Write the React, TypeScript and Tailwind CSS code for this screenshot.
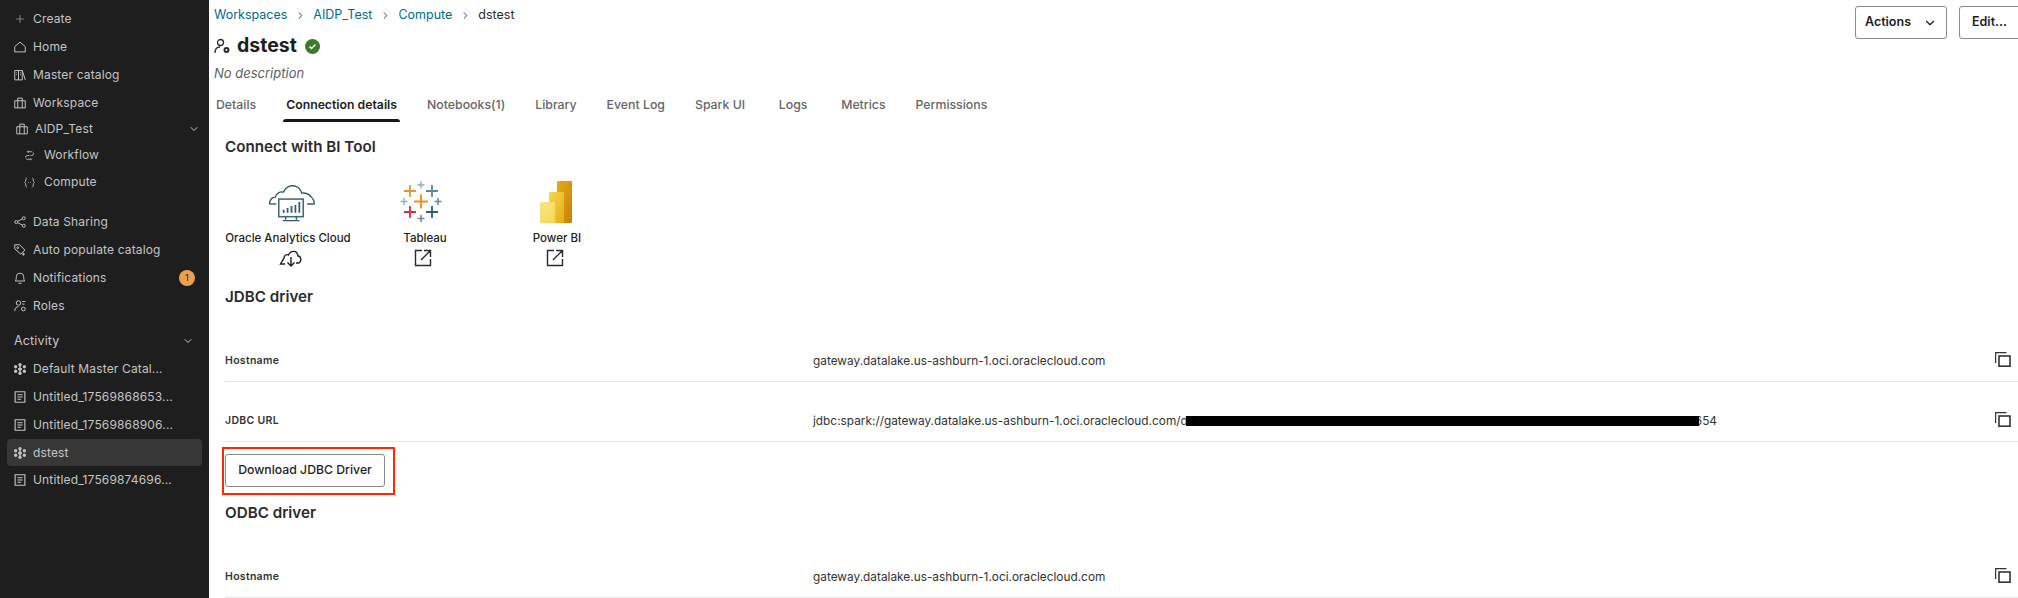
import { ChevronDown, ChevronRight, Plus } from "lucide-react"
import type { ReactNode } from "react"

const I = ({ children, size = 12 }: { children: ReactNode; size?: number }) => (
    <svg width={size} height={size} viewBox="0 0 16 16" fill="none" stroke="currentColor" strokeWidth="1.300" className="shrink-0">
        {children}
    </svg>
)

const HomeIcon = () => <I><path d="M1 14.500V7.500L8 1.500l7 6v7z" /></I>
const CatalogIcon = () => <I><path d="M1 2h5v12.500H1zM6 2h5v12.500H6zM11 2l4 12.500M3 5h1M8 5h1M3 7.500h1M8 7.500h1" /></I>
const CaseIcon = () => <I><path d="M1 5h14v9.500H1zM5 5V1.500h6V5M5 5v9.500M11 5v9.500" /></I>
const ShareIcon = () => <I><circle cx="3" cy="8" r="2" /><circle cx="13" cy="3" r="2" /><circle cx="13" cy="13" r="2" /><path d="M5 7l6-3M5 9l6 3" /></I>
const TagIcon = () => <I><path d="M1 1h6.500l7 7-5.500 5.500-8-7zM12.500 11.500v4M10.500 13.500h4" /><circle cx="5" cy="5" r="1.200" /></I>
const BellIcon = () => <I><path d="M1.500 12c1.500-1 1.500-3 1.500-5.500a5 5 0 0 1 10 0c0 2.500 0 4.500 1.500 5.500zM6 15h4" /></I>
const RolesIcon = () => <I><circle cx="6" cy="4" r="3" /><path d="M1 15c0-4 2-6 5-6M11 2h4M11 5.500h3" /><circle cx="12.500" cy="12" r="2.500" /></I>
const NodesIcon = () => (
    <svg width="12" height="12" viewBox="0 0 16 16" fill="currentColor" className="shrink-0">
        {[[8, 2.200], [8, 13.800], [2.200, 5], [13.800, 5], [2.200, 11], [13.800, 11]].map(([cx, cy], i) => (
            <circle key={i} cx={cx} cy={cy} r="2.200" />
        ))}
        <path d="M5.500 6.500h5v3h-5zM7 2.500h2v11H7z" />
    </svg>
)
const DocIcon = () => <I><path d="M1.500 1h13v14h-13zM4.500 5h7M4.500 8h7M4.500 11h5" strokeWidth="1.500" /></I>

const NavRow = ({ icon, label, right }: { icon: ReactNode; label: string; right?: ReactNode }) => (
    <div className="flex h-[28px] items-center gap-[8px] pl-[14px] pr-[14px]">
        {icon}
        <span className="-ml-[1px] flex-1">{label}</span>
        {right}
    </div>
)

const Sidebar = () => (
    <aside className="flex h-[598px] w-[209px] shrink-0 flex-col bg-[#1e1e1e] pt-[5px] text-[12px] tracking-[0.15px] text-[#c4c4c4]">
        <NavRow icon={<Plus size={12} strokeWidth={1.200} />} label="Create" />
        <NavRow icon={<HomeIcon />} label="Home" />
        <NavRow icon={<CatalogIcon />} label="Master catalog" />
        <NavRow icon={<CaseIcon />} label="Workspace" />
        <div className="flex h-[24px] items-center gap-[7px] pl-[16px] pr-[9px]">
            <CaseIcon />
            <span className="flex-1">AIDP_Test</span>
            <ChevronDown size={12} />
        </div>
        <div className="flex h-[28px] items-center gap-[9px] pl-[24px]">
            <I size={11}><path d="M5 2.500h6a2.700 2.700 0 0 1 0 5.500H5a2.700 2.700 0 0 0 0 5.500h6M6.500 1L5 2.500 6.500 4M9.500 12L11 13.500 9.500 15" strokeDasharray="7 1.500" /></I>
            <span>Workflow</span>
        </div>
        <div className="flex h-[26px] items-center gap-[9px] pl-[24px]">
            <I size={11}><path d="M4 1C2 1 3.500 7 1 8c2.500 1 1 7 3 7M12 1c2 0 .5 6 3 7-2.500 1-1 7-3 7M6 8h.8M9.200 8h.8" /></I>
            <span>Compute</span>
        </div>
        <div className="h-[13px]" />
        <NavRow icon={<ShareIcon />} label="Data Sharing" />
        <NavRow icon={<TagIcon />} label="Auto populate catalog" />
        <NavRow
            icon={<BellIcon />}
            label="Notifications"
            right={<span className="flex h-[16px] w-[16px] items-center justify-center rounded-full bg-[#eda04f] text-[9px] text-[#1e1e1e]">1</span>}
        />
        <NavRow icon={<RolesIcon />} label="Roles" />
        <div className="mt-[7px] flex h-[28px] items-center justify-between pl-[14px] pr-[15px] text-[12.500px]">
            <span>Activity</span>
            <ChevronDown size={12} />
        </div>
        <NavRow icon={<NodesIcon />} label="Default Master Catal..." />
        <NavRow icon={<DocIcon />} label="Untitled_17569868653..." />
        <NavRow icon={<DocIcon />} label="Untitled_17569868906..." />
        <div className="mx-[7px] flex h-[27px] items-center gap-[7px] rounded-[4px] bg-[#373737] pl-[7px]">
            <NodesIcon />
            <span>dstest</span>
        </div>
        <NavRow icon={<DocIcon />} label="Untitled_17569874696..." />
    </aside>
)

const tabs = ["Details", "Connection details", "Notebooks(1)", "Library", "Event Log", "Spark UI", "Logs", "Metrics", "Permissions"]

const Tabs = () => (
    <div className="mt-[13px] flex gap-[30px] pl-[7px] text-[12.300px] font-medium text-[#666666]">
        {tabs.map((t) => (
            <div key={t} className={t === "Connection details" ? "relative h-[26px] min-w-[36px] text-center text-[12.250px] font-semibold text-[#1d1d1d]" : "h-[26px] min-w-[36px] text-center"}>
                {t}
                {t === "Connection details" && <div className="absolute -left-[3px] -right-[3px] bottom-0 h-[3px] rounded-t-[3px] bg-[#161513]" />}
            </div>
        ))}
    </div>
)

const ExternalIcon = () => (
    <svg width="18" height="18" viewBox="0 0 18 18" fill="none" stroke="#2b2b2b" strokeWidth="1.400" className="-ml-[4px]">
        <path d="M8 1.500H1.500v15h15V10M10 1.500h6.500V8M16.500 1.500L7 11" />
    </svg>
)

const CloudDownIcon = () => (
    <svg width="24" height="18" viewBox="0 0 24 18" fill="none" stroke="#1f1f1f" strokeWidth="1.400" className="ml-[6px]">
        <path d="M6 15H1.500L5 9c0-3 3-4 4.500-3C11 2 18 0 19 7c3 0 4 5 1 7h-3" />
        <path d="M12 8v9M8.500 13.500L12 17l3.500-3.500" />
    </svg>
)

const OacLogo = () => (
    <svg width="47" height="40" viewBox="0 0 48 40" fill="none" stroke="#2f5a6f" strokeWidth="1.400" className="ml-[6px]">
        <path d="M1.500 22c0-4 2.500-7 6-7 1-4 5-6 8-5 2-5 8-8 13-6 3 1 5 4 6 7 5-1 9 2 12 7 .6 1 .8 2.500.5 4h-7" />
        <path d="M1.500 22h7" />
        <rect x="11" y="17" width="25" height="18" strokeWidth="1.600" stroke="#44697c" />
        <path d="M18 35v3M29 35v3M15 39h17" />
        <path d="M16 31v-3M20 31v-5M24 31v-7M28 31v-8M32 31v-11" stroke="#2f5a6f" strokeWidth="1.800" />
    </svg>
)

const Cross = ({ x, y, s, c, w = 2 }: { x: number; y: number; s: number; c: string; w?: number }) => (
    <path d={`M${x - s} ${y}H${x + s}M${x} ${y - s}V${y + s}`} stroke={c} strokeWidth={w} />
)

const TableauLogo = () => (
    <svg width="42" height="42" viewBox="0 0 42 42" fill="none" className="-ml-[8px]">
        <Cross x={21} y={20.500} s={7} c="#e8962c" w={2.200} />
        <Cross x={21} y={4} s={3.500} c="#7fb3c8" w={1.400} />
        <Cross x={21} y={37.500} s={3.500} c="#6d8c9c" w={1.600} />
        <Cross x={4} y={20.500} s={3.500} c="#7fb3c8" w={1.400} />
        <Cross x={38} y={20.500} s={3.500} c="#6d8c9c" w={1.600} />
        <Cross x={10} y={10} s={6} c="#e8962c" w={1.800} />
        <Cross x={32} y={10} s={6} c="#5b879b" w={1.800} />
        <Cross x={10} y={31} s={6} c="#d6303f" w={1.800} />
        <Cross x={32} y={31} s={6} c="#2f5f7c" w={1.800} />
    </svg>
)

const PowerBiLogo = () => (
    <svg width="32" height="42" viewBox="0 0 32 42" className="-ml-[2px]">
        <defs>
            <linearGradient id="pb1" x1="0" y1="0" x2="1" y2="1">
                <stop offset="0" stopColor="#e6ad10" />
                <stop offset="1" stopColor="#c87d0e" />
            </linearGradient>
            <linearGradient id="pb2" x1="0" y1="0" x2="1" y2="1">
                <stop offset="0" stopColor="#f6d751" />
                <stop offset="1" stopColor="#e6ad10" />
            </linearGradient>
            <linearGradient id="pb3" x1="0" y1="0" x2="1" y2="1">
                <stop offset="0" stopColor="#f9e589" />
                <stop offset="1" stopColor="#f6d751" />
            </linearGradient>
        </defs>
        <rect x="17" y="0" width="15" height="42" rx="1" fill="url(#pb1)" />
        <rect x="9" y="11" width="15" height="31" rx="1" fill="url(#pb2)" />
        <rect x="0" y="21" width="15" height="21" rx="1" fill="url(#pb3)" />
    </svg>
)

const Tool = ({ logo, name, action, className }: { logo: ReactNode; name: string; action: ReactNode; className: string }) => (
    <div className={`flex flex-col items-center ${className}`}>
        <div className="flex h-[48px] items-center">{logo}</div>
        <div className="mt-[4px] h-[16px] whitespace-nowrap text-[11.500px] font-medium leading-[16px] text-[#1d1d1d]">{name}</div>
        <div className="mt-[2px] flex h-[20px] items-center">{action}</div>
    </div>
)

const CopyIcon = () => (
    <svg width="16" height="15" viewBox="0 0 16 15" fill="none" stroke="#333333" strokeWidth="1.200">
        <path d="M11.500 .6H.6v10.400" />
        <rect x="4" y="4" width="11" height="10.200" strokeWidth="1.600" />
    </svg>
)

const Row = ({ label, children }: { label: string; children: ReactNode }) => (
    <div className="flex h-[60px] items-end border-b border-[#e4e4e4] pb-[12px] text-[11.850px] text-[#333333]">
        <div className="w-[588px] text-[10.500px] font-semibold tracking-[0.3px] text-[#333333]">{label}</div>
        <div className="flex-1 leading-[16px]">{children}</div>
        <div className="pr-[7px] -translate-y-[2px]"><CopyIcon /></div>
    </div>
)

const Heading = ({ children, className = "" }: { children: ReactNode; className?: string }) => (
    <h2 className={`text-[15.200px] font-semibold leading-[20px] text-[#2b2b2b] ${className}`}>{children}</h2>
)

const Crumb = ({ children }: { children: ReactNode }) => (
    <>
        <span className="text-[#006b8f]">{children}</span>
        <ChevronRight size={11} className="mx-[7.500px] text-[#333333]" strokeWidth={2} />
    </>
)

export default function App() {
    return (
        <div className="flex h-[598px] w-[2018px] overflow-hidden bg-white font-['Inter',sans-serif]">
            <Sidebar />
            <main className="min-w-0 flex-1">
                <div className="flex items-start justify-between pl-[5px]">
                    <div>
                        <div className="flex h-[28px] items-center pt-[2px] text-[12.500px] text-[#2b2b2b]">
                            <Crumb>Workspaces</Crumb>
                            <Crumb>AIDP_Test</Crumb>
                            <Crumb>Compute</Crumb>
                            <span>dstest</span>
                        </div>
                        <div className="mt-[3px] flex h-[30px] items-center gap-[7px]">
                            <svg width="16" height="16" viewBox="0 0 16 16" fill="none" stroke="#2b2b2b" strokeWidth="1.300">
                                <circle cx="6.500" cy="4.500" r="3" />
                                <path d="M1 15c0-4 2-6 5-6" />
                                <circle cx="12.500" cy="12" r="2" strokeWidth="2" />
                            </svg>
                            <span className="text-[19.500px] font-bold leading-none text-[#1d1d1d]">dstest</span>
                            <svg width="15" height="15" viewBox="0 0 15 15" className="ml-[1px]">
                                <circle cx="7.500" cy="7.500" r="7.500" fill="#3f7a2a" />
                                <path d="M4.500 7.500l2 2 4-4" fill="none" stroke="white" strokeWidth="1.500" />
                            </svg>
                        </div>
                        <div className="mt-[2px] text-[13px] italic leading-[20px] text-[#5f5f5f]">No description</div>
                    </div>
                    <div className="mt-[6px] flex shrink-0 gap-[12px] -mr-[41px] text-[12.500px] font-semibold text-[#1d1d1d]">
                        <div className="flex h-[33px] w-[92px] items-center justify-center gap-[12px] rounded-[3px] border border-[#8a8a8a]">
                            Actions <ChevronDown size={14} strokeWidth={2} />
                        </div>
                        <div className="flex h-[33px] w-[100px] items-center rounded-[3px] border border-[#8a8a8a] pl-[12px]">Edit...</div>
                    </div>
                </div>
                <Tabs />
                <div className="pl-[16px] pt-[15px]">
                    <Heading>Connect with BI Tool</Heading>
                    <div className="mt-[21px] flex">
                        <Tool className="w-[126px]" logo={<OacLogo />} name="Oracle Analytics Cloud" action={<CloudDownIcon />} />
                        <Tool className="ml-[8px] w-[132px]" logo={<TableauLogo />} name="Tableau" action={<ExternalIcon />} />
                        <Tool className="w-[132px]" logo={<PowerBiLogo />} name="Power BI" action={<ExternalIcon />} />
                    </div>
                    <Heading className="mb-[15px] mt-[19px]">JDBC driver</Heading>
                    <Row label="Hostname">gateway.datalake.us-ashburn-1.oci.oraclecloud.com</Row>
                    <Row label="JDBC URL">
                        jdbc:spark://gateway.datalake.us-ashburn-1.oci.oraclecloud.com/d
                        <span className="relative z-10 -ml-[2px] inline-block h-[10px] w-[513px] translate-y-[1px] bg-black" />
                        <span className="-ml-[4px]">654</span>
                    </Row>
                    <div className="-ml-[3px] mt-[5px] w-[173px] border-2 border-[#fa2a05] pb-[6px] pl-[1px] pt-[5px]">
                        <button className="flex h-[33px] w-[160px] items-center justify-center rounded-[3px] border border-[#8a8a8a] text-[12.250px] font-medium text-[#1d1d1d]">
                            Download JDBC Driver
                        </button>
                    </div>
                    <Heading className="mb-[15px] mt-[8px]">ODBC driver</Heading>
                    <Row label="Hostname">gateway.datalake.us-ashburn-1.oci.oraclecloud.com</Row>
                </div>
            </main>
        </div>
    )
}
